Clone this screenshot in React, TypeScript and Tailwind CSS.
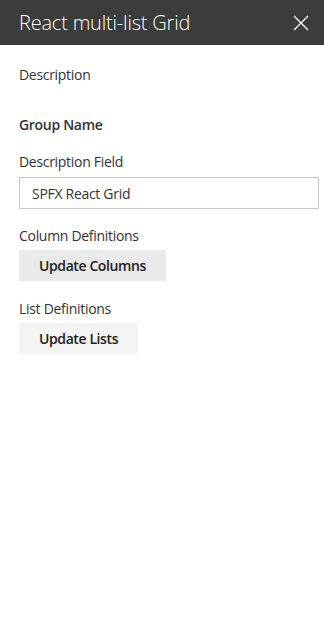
import React from "react";

const font = { fontFamily: '"Open Sans", "Liberation Sans", sans-serif' };

function CloseIcon() {
  return (
    <svg width="16" height="16" viewBox="0 0 16 16" className="text-white">
      <path d="M1 1 L15 15 M15 1 L1 15" stroke="currentColor" strokeWidth="1.4" fill="none" />
    </svg>
  );
}

export default function App() {
  return (
    <div className="w-[324px] h-[626px] bg-white text-[#333333]" style={font}>
      {/* Panel header */}
      <div className="h-[45px] bg-[#3c3c3c] flex items-center justify-between pl-[19px] pr-[7px]">
        <h1 className="text-[20px] font-light text-white tracking-[-0.2px] leading-none">
          React multi-list Grid
        </h1>
        <button className="w-[32px] h-[32px] flex items-center justify-center">
          <CloseIcon />
        </button>
      </div>

      <div className="px-[19px] text-[14px] tracking-[-0.3px]">
        <p className="mt-[20px] leading-[20px]">Description</p>

        <p className="mt-[30px] leading-[20px] font-semibold">Group Name</p>

        <label className="block mt-[17px] leading-[20px]">Description Field</label>
        <input
          readOnly
          value="SPFX React Grid"
          className="mt-[5px] w-[300px] h-[32px] border border-[#c8c8c8] px-[12px] text-[14px] text-[#333333] outline-none"
        />

        <p className="mt-[17px] leading-[20px]">Column Definitions</p>
        <button className="mt-[4px] h-[31px] px-[20px] bg-[#eaeaea] font-semibold text-[#212121] tracking-[-0.4px]">
          Update Columns
        </button>

        <p className="mt-[18px] leading-[20px]">List Definitions</p>
        <button className="mt-[4px] h-[31px] px-[20px] bg-[#f4f4f4] font-semibold text-[#212121] tracking-[-0.4px]">
          Update Lists
        </button>
      </div>
    </div>
  );
}
